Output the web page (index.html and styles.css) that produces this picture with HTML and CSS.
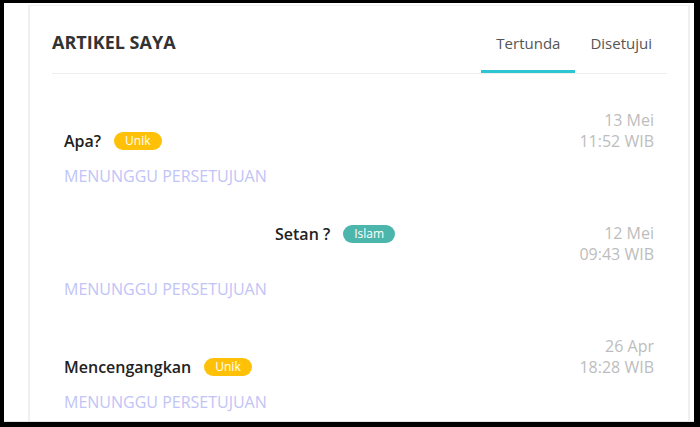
FILE: index.html
```html
<!DOCTYPE html>
<html lang="id">
<head>
    <meta charset="UTF-8">
    <meta name="viewport" content="width=device-width, initial-scale=1.0">
    <title>Artikel Saya</title>
    <link rel="stylesheet" href="styles.css">
</head>
<body>

    <div class="panel">
        <div class="card">
            <div class="card-header">
                <h2 class="card-title">ARTIKEL SAYA</h2>
                <div class="tabs">
                    <span class="tab active">Tertunda</span>
                    <span class="tab">Disetujui</span>
                </div>
            </div>

            <div class="article-list">
                <div class="article">
                    <div class="article-row">
                        <div class="article-title">
                            <span class="title-text">Apa?</span>
                            <span class="badge badge-yellow">Unik</span>
                        </div>
                        <div class="article-date">13 Mei<br>11:52 WIB</div>
                    </div>
                    <div class="article-status">MENUNGGU PERSETUJUAN</div>
                </div>

                <div class="article">
                    <div class="article-row row-top">
                        <div class="article-title title-shifted">
                            <span class="title-text">Setan ?</span>
                            <span class="badge badge-teal">Islam</span>
                        </div>
                        <div class="article-date">12 Mei<br>09:43 WIB</div>
                    </div>
                    <div class="article-status">MENUNGGU PERSETUJUAN</div>
                </div>

                <div class="article">
                    <div class="article-row">
                        <div class="article-title">
                            <span class="title-text">Mencengangkan</span>
                            <span class="badge badge-yellow">Unik</span>
                        </div>
                        <div class="article-date">26 Apr<br>18:28 WIB</div>
                    </div>
                    <div class="article-status">MENUNGGU PERSETUJUAN</div>
                </div>
            </div>
        </div>
    </div>

</body>
</html>
```

FILE: styles.css
```css
html, body {
    margin: 0;
    height: 427px;
    overflow: hidden;
}
body {
    font-family: "Open Sans", Arial, sans-serif;
    background-color: #000;
    padding: 3px 6px 5px 4px;
    box-sizing: border-box;
}
.panel {
    background-color: #fff;
    height: 419px;
    box-sizing: border-box;
    border-bottom: 1px solid #e2e4e6;
    padding: 2px 4px 0 24px;
    overflow: hidden;
}
.card {
    border: 2px solid #edf1f1;
    border-top-width: 1px;
    border-bottom: none;
    height: 100%;
    box-sizing: border-box;
    padding: 0 21px 0 22px;
}
.card-header {
    display: flex;
    justify-content: space-between;
    align-items: baseline;
    padding-top: 24px;
    border-bottom: 1px solid #eeeeee;
}
.card-title {
    margin: 0;
    font-size: 18px;
    line-height: 24px;
    font-weight: 700;
    color: #333;
}
.tabs {
    display: flex;
}
.tab {
    font-size: 15px;
    line-height: 20px;
    color: #555;
    padding: 0 15px 17px;
    border-bottom: 3px solid transparent;
}
.tab.active {
    border-bottom-color: #2ec5d3;
}
.article-list {
    padding: 0 13px 0 12px;
}
.article {
    padding-top: 36px;
}
.article-row {
    display: flex;
    justify-content: space-between;
    align-items: flex-end;
}
.article-row.row-top {
    align-items: flex-start;
}
.article-title {
    display: flex;
    align-items: center;
}
.title-shifted {
    margin-left: 211px;
}
.title-text {
    font-size: 16px;
    line-height: 22px;
    font-weight: 600;
    color: #222;
}
.badge {
    margin-left: 13px;
    height: 18px;
    line-height: 18px;
    padding: 0 11px;
    border-radius: 9px;
    font-size: 12px;
    color: #fff;
}
.badge-yellow {
    background-color: #ffc107;
}
.badge-teal {
    background-color: #4db6ac;
}
.article-date {
    text-align: right;
    font-size: 16px;
    line-height: 21px;
    color: #bdbdbd;
}
.article-status {
    margin-top: 14px;
    font-size: 16px;
    line-height: 21px;
    color: #c1c4f6;
}
```
